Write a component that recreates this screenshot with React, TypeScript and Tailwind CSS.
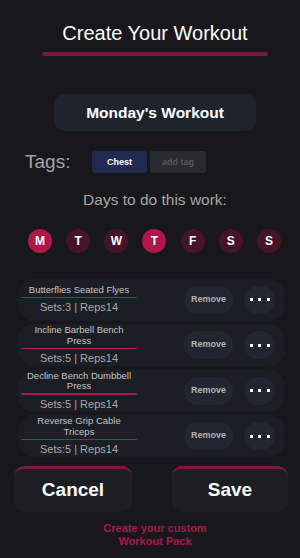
import React from 'react';

const days = [
  { label: 'M', active: true },
  { label: 'T', active: false },
  { label: 'W', active: false },
  { label: 'T', active: true },
  { label: 'F', active: false },
  { label: 'S', active: false },
  { label: 'S', active: false }
];

const exercises = [
  { name: ['Butterflies Seated Flyes'], sets: 3, reps: 14 },
  { name: ['Incline Barbell Bench', 'Press'], sets: 5, reps: 14 },
  { name: ['Decline Bench Dumbbell', 'Press'], sets: 5, reps: 14 },
  { name: ['Reverse Grip Cable', 'Triceps'], sets: 5, reps: 14 }
];

function ExerciseRow({ name, sets, reps }: { name: string[]; sets: number; reps: number }) {
  return (
    <div className="flex h-[42px] items-center rounded-2xl bg-[#1b1e25]">
      <div className="ml-[3px] flex w-[116px] flex-col items-center">
        <div className="text-center text-[9.5px] leading-[10.5px] text-[#c4c4c4]">
          {name.map((line, i) => (
            <div key={i}>{line}</div>
          ))}
        </div>
        <div className="mt-[1.5px] h-[1.5px] w-full rounded-full bg-[#b3174b]" />
        <div className="mt-[3px] text-[11px] leading-[13px] text-[#a9a9a9]">
          Sets:{sets} | Reps{reps}
        </div>
      </div>
      <button
        type="button"
        className="ml-auto flex h-[28px] w-[49px] items-center justify-center rounded-[14px] bg-[#222630] text-[9px] font-bold text-[#b4b4b4]"
      >
        Remove
      </button>
      <button
        type="button"
        className="ml-[11px] mr-[10px] flex h-[28px] w-[31px] items-center justify-center gap-[5.5px] rounded-[14px] bg-[#222630]"
      >
        <span className="h-[3px] w-[3px] bg-white" />
        <span className="h-[3px] w-[3px] bg-white" />
        <span className="h-[3px] w-[3px] bg-white" />
      </button>
    </div>
  );
}

export default function App() {
  return (
    <div
      className="flex h-[558px] w-[300px] flex-col items-center overflow-hidden bg-[#18171c] pl-[10px]"
      style={{ fontFamily: '"Liberation Sans", Arial, sans-serif' }}
    >
      <h1 className="mt-[22px] text-[20px] leading-[23px] text-white">Create Your Workout</h1>
      <div className="mt-[7px] h-[4px] w-[226px] rounded-full bg-[#7a1a3e]" />

      <div className="mt-[38px] flex h-[37px] w-[202px] items-center justify-center rounded-[10px] bg-[#1f232b] text-[15.5px] font-bold text-white">
        Monday's Workout
      </div>

      <div className="mt-[17px] flex w-full items-center pl-[15px]">
        <span className="w-[67px] text-[19px] text-[#a3a3a3]">Tags:</span>
        <span className="flex h-[22px] w-[55px] items-center justify-center rounded-[3px] bg-[#232a52] text-[9px] font-bold text-white">
          Chest
        </span>
        <span className="ml-[3px] flex h-[22px] w-[56px] items-center justify-center rounded-[3px] bg-[#2a2a31] text-[9px] font-bold text-[#58585f]">
          add tag
        </span>
      </div>

      <div className="mt-[14px] text-[15.5px] leading-[18px] text-[#a6a6a6]">Days to do this work:</div>

      <div className="mt-[20px] flex w-full justify-between pl-[18px] pr-[19px]">
        {days.map((d, i) => (
          <div
            key={i}
            className={`flex h-[24px] w-[24px] items-center justify-center rounded-full text-[12px] font-bold text-white ${
              d.active ? 'bg-[#b0184a]' : 'bg-[#461428]'
            }`}
          >
            {d.label}
          </div>
        ))}
      </div>

      <div className="mt-[26px] ml-[8px] flex w-[267px] flex-col gap-[3.5px] self-start">
        {exercises.map((ex, i) => (
          <ExerciseRow key={i} name={ex.name} sets={ex.sets} reps={ex.reps} />
        ))}
      </div>

      <div className="mt-[9px] flex w-full justify-between pl-[4px] pr-[12px]">
        <button
          type="button"
          className="h-[46px] w-[118px] rounded-[10px] border-t-[3px] border-[#7a1a3e] bg-[#1d1e23] text-[19px] font-bold text-white"
        >
          Cancel
        </button>
        <button
          type="button"
          className="h-[46px] w-[116px] rounded-[10px] border-t-[3px] border-[#7a1a3e] bg-[#1d1e23] text-[19px] font-bold text-white"
        >
          Save
        </button>
      </div>

      <div className="mt-[10px] text-center text-[11px] font-bold leading-[13px] text-[#a8184a]">
        <div>Create your custom</div>
        <div>Workout Pack</div>
      </div>
    </div>
  );
}
